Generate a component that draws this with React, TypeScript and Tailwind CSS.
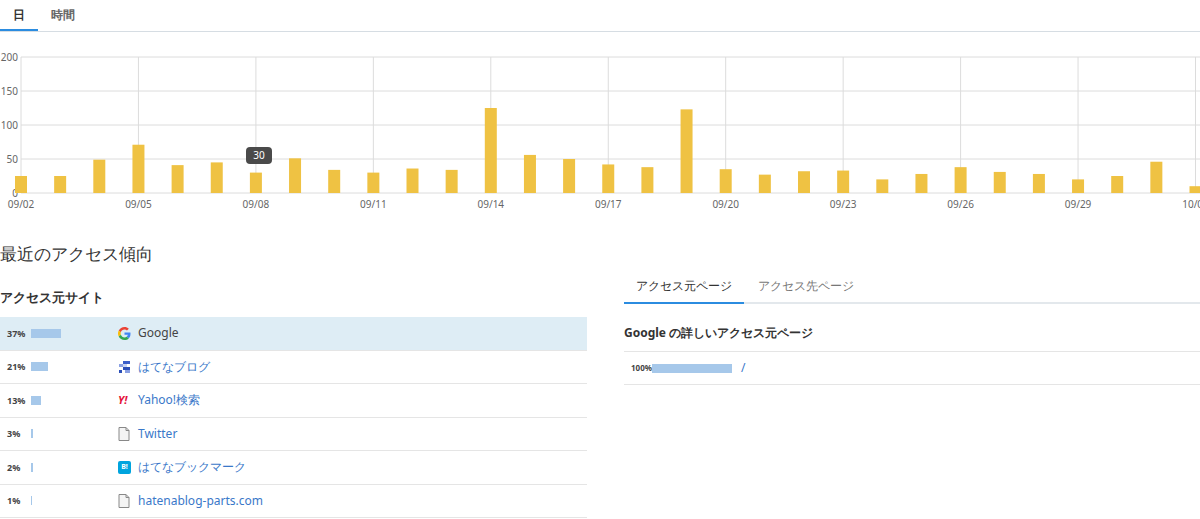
import React from "react"

const vals = [25,25,49,71,41,45,30,51,34,30,36,34,125,56,50,42,38,123,35,27,32,33,20,28,38,31,28,20,25,46,10]
const labels = ["09/02","09/05","09/08","09/11","09/14","09/17","09/20","09/23","09/26","09/29","10/02"]

function Chart() {
  const x0 = 21, step = 39.15, base = 161, k = 0.68
  return (
    <svg width="1200" height="190" className="block">
      {[0, 50, 100, 150, 200].map((v) => (
        <g key={v}>
          <line x1={x0} x2={1200} y1={base - v * k} y2={base - v * k} stroke="#dcdcdc" />
          <text x={18} y={base - v * k + 4} textAnchor="end" fontSize="10" fill="#666">{v}</text>
        </g>
      ))}
      <line x1={x0} x2={x0} y1={25} y2={base} stroke="#dcdcdc" />
      {labels.map((l, i) => {
        const x = x0 + i * 3 * step
        return (
          <g key={l}>
            {i > 0 && <line x1={x} x2={x} y1={25} y2={base} stroke="#dcdcdc" />}
            <text x={x} y={176} textAnchor="middle" fontSize="10" fill="#666">{l}</text>
          </g>
        )
      })}
      {vals.map((v, i) => (
        <rect key={i} x={x0 + i * step - 6} y={base - v * k} width={12} height={v * k} fill="#efc243" />
      ))}
      <rect x={246} y={115} width={26} height={17} rx={4} fill="#4a4a4a" />
      <text x={259} y={127} textAnchor="middle" fontSize="10" fill="#fff">30</text>
    </svg>
  )
}

const sites = [
  { p: "37%", w: 30, name: "Google", icon: "g", active: true },
  { p: "21%", w: 17, name: "はてなブログ", icon: "hb" },
  { p: "13%", w: 10, name: "Yahoo!検索", icon: "y" },
  { p: "3%", w: 2, name: "Twitter", icon: "doc" },
  { p: "2%", w: 2, name: "はてなブックマーク", icon: "b" },
  { p: "1%", w: 1, name: "hatenablog-parts.com", icon: "doc" },
]

function Icon({ t }: { t: string }) {
  if (t === "g")
    return (
      <svg width="13" height="13" viewBox="0 0 48 48">
        <path fill="#EA4335" d="M24 9.5c3.5 0 6.6 1.2 9.1 3.6l6.8-6.8C35.8 2.4 30.3 0 24 0 14.6 0 6.6 5.4 2.7 13.3l7.9 6.1C12.5 13.7 17.8 9.5 24 9.5z" />
        <path fill="#4285F4" d="M46.1 24.5c0-1.6-.1-3.1-.4-4.5H24v9h12.4c-.5 2.9-2.2 5.3-4.6 6.9l7.7 6c4.5-4.1 6.6-10.2 6.6-17.4z" />
        <path fill="#FBBC05" d="M10.5 28.6c-.5-1.4-.8-3-.8-4.6s.3-3.2.8-4.6l-7.9-6.1C1 16.6 0 20.2 0 24s1 7.4 2.7 10.7l7.8-6.1z" />
        <path fill="#34A853" d="M24 48c6.5 0 11.900-2.1 15.9-5.8l-7.7-6c-2.2 1.5-4.9 2.3-8.2 2.3-6.2 0-11.5-4.2-13.4-9.9l-7.9 6.1C6.6 42.6 14.6 48 24 48z" />
      </svg>
    )
  if (t === "hb")
    return (
      <svg width="13" height="13" viewBox="0 0 13 13">
        <rect x="5" y="1" width="7" height="3" fill="#3b5ec9" />
        <rect x="1" y="4" width="4" height="3" fill="#8aa0e3" />
        <rect x="5" y="4" width="4" height="3" fill="#c9d4f3" />
        <rect x="5" y="7" width="7" height="3" fill="#2c4fb8" />
        <rect x="1" y="10" width="3" height="3" fill="#2c4fb8" />
        <rect x="7" y="10" width="5" height="3" fill="#8aa0e3" />
      </svg>
    )
  if (t === "y") return <span className="text-[11px] font-bold italic text-[#e5133a] font-['Liberation_Serif',serif] w-[16px]">Y!</span>
  if (t === "b")
    return <span className="w-[13px] h-[13px] rounded-[2px] bg-[#00a4de] text-white text-[7px] font-bold flex items-center justify-center">B!</span>
  return (
    <svg width="12" height="14" viewBox="0 0 12 14">
      <path d="M1 .5h7l3 3v10H1z" fill="#f4f4f4" stroke="#888" />
      <path d="M8 .5v3h3" fill="none" stroke="#888" />
    </svg>
  )
}

export default function App() {
  return (
    <div className="w-[1200px] h-[519px] overflow-hidden bg-white font-['Noto_Sans_CJK_JP','Noto_Sans',sans-serif] text-[#333]">
      <div className="flex border-b border-[#d6dde3] h-[32px] text-[12px] font-bold">
        <div className="w-[38px] flex justify-center pt-[6px] border-b-2 border-[#2b8ce0] text-[#333]">日</div>
        <div className="px-[13px] pt-[6px] text-[#666]">時間</div>
      </div>
      <Chart />
      <h2 className="text-[17px] mt-[19px] leading-[26px]">最近のアクセス傾向</h2>
      <div className="flex mt-[20px]">
        <div className="w-[587px]">
          <h3 className="text-[13px] font-bold leading-[20px] mb-[10px]">アクセス元サイト</h3>
          {sites.map((s) => (
            <div key={s.name} className={`flex items-center h-[33.5px] border-b border-[#e5e5e5] ${s.active ? "bg-[#deedf5]" : ""}`}>
              <span className="w-[31px] pl-[7px] text-[9px] font-bold text-[#444]">{s.p}</span>
              <span className="w-[87px] flex"><span className="h-[9px] bg-[#a6c8ea]" style={{ width: s.w }} /></span>
              <span className="w-[20px] flex items-center"><Icon t={s.icon} /></span>
              <span className={`text-[12px] ${s.active ? "text-[#444]" : "text-[#3a78c9]"}`}>{s.name}</span>
            </div>
          ))}
        </div>
        <div className="flex-1 ml-[37px] -mt-[12px]">
          <div className="flex border-b-2 border-[#e3e8ec] text-[12px] h-[29px]">
            <div className="px-[12px] pt-[2px] border-b-2 border-[#2b8ce0] -mb-[2px] text-[#333]">アクセス元ページ</div>
            <div className="px-[14px] pt-[2px] text-[#777]">アクセス先ページ</div>
          </div>
          <h3 className="text-[12px] font-bold mt-[20px] leading-[18px] pb-[9px] border-b border-[#e5e5e5]">Google の詳しいアクセス元ページ</h3>
          <div className="flex items-center h-[33px] border-b border-[#e5e5e5]">
            <span className="pl-[7px] text-[8px] font-bold text-[#444]">100%</span>
            <span className="w-[80px] h-[9px] bg-[#a6c8ea]" />
            <span className="ml-[9px] text-[12px] text-[#3a78c9]">/</span>
          </div>
        </div>
      </div>
    </div>
  )
}
